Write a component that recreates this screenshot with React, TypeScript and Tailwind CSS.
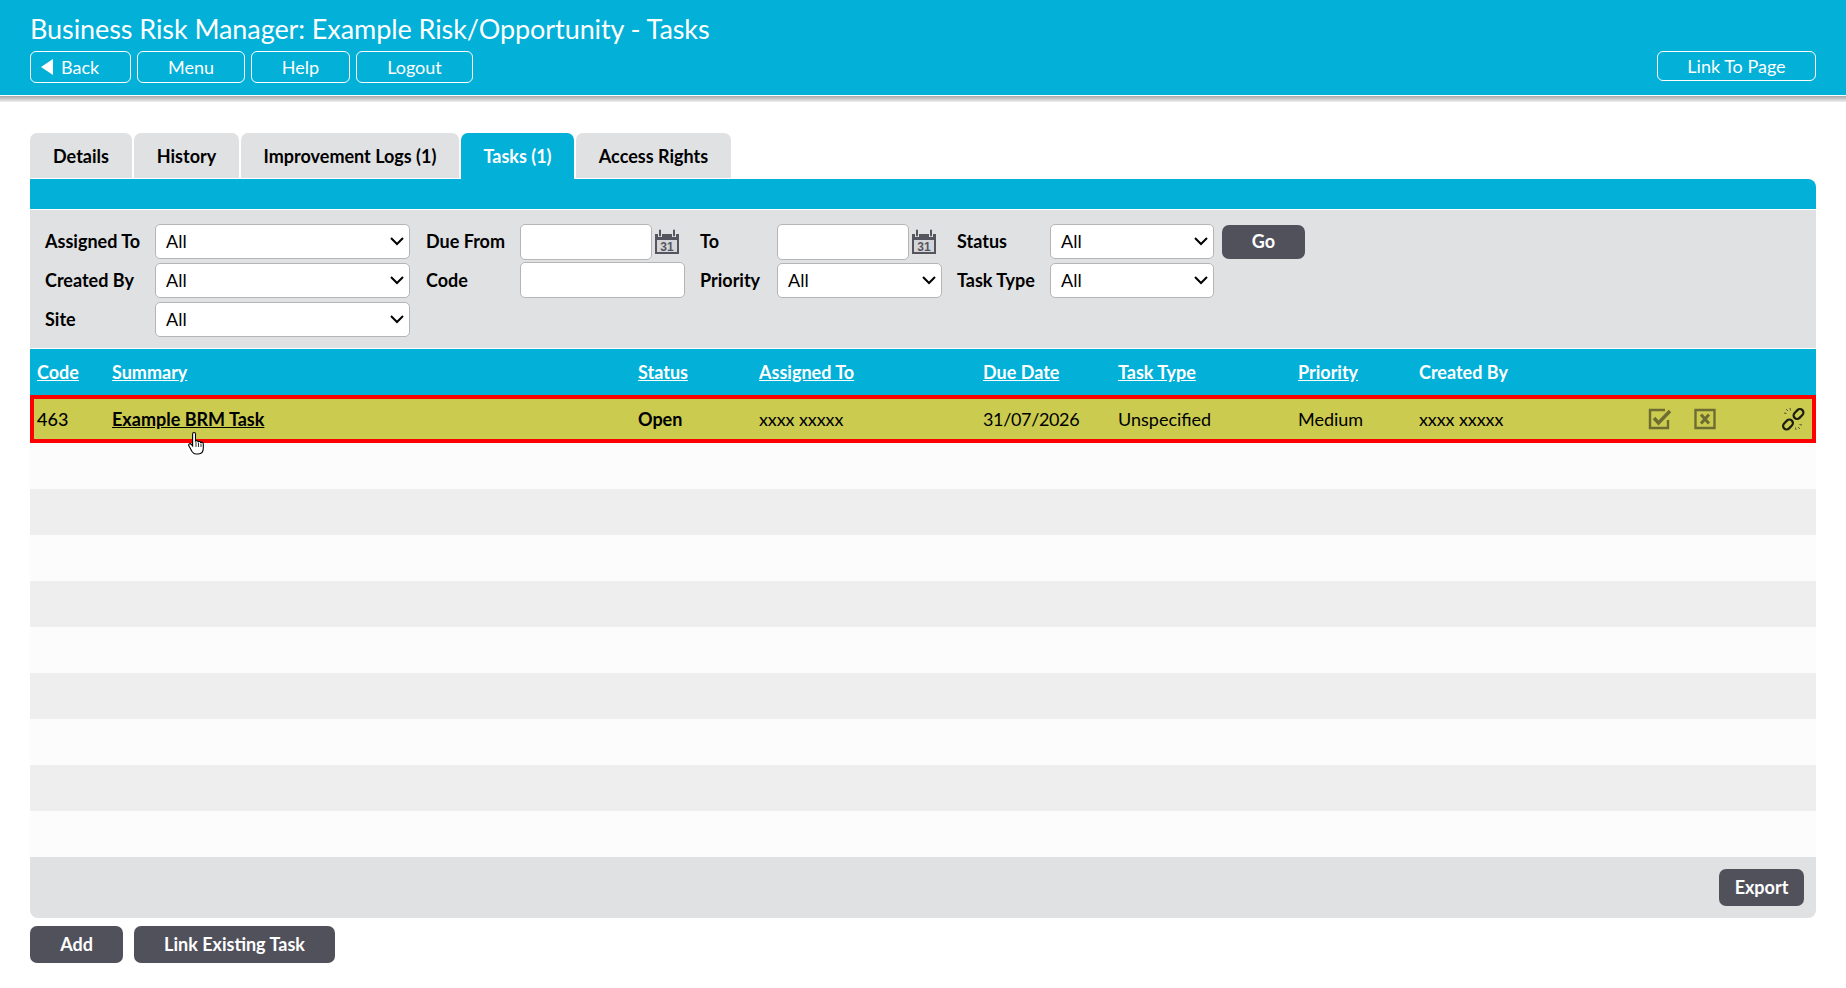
import React from 'react';

const tabs = [
  { label: 'Details', width: 'w-[102px]' },
  { label: 'History', width: 'w-[105px]' },
  { label: 'Improvement Logs (1)', width: 'w-[218px]' },
  { label: 'Tasks (1)', width: 'w-[113px]', active: true },
  { label: 'Access Rights', width: 'w-[155px]' },
];

const columns = ['Code', 'Summary', 'Status', 'Assigned To', 'Due Date', 'Task Type', 'Priority'];

function Calendar() {
  return (
    <svg width="26" height="26" viewBox="0 0 26 26" className="ml-[2px] shrink-0">
      <path d="M1 5h24v20H1z" fill="#55555f" />
      <path d="M3 11h20v12H3z" fill="#d5d6d9" />
      <path d="M6 2v6M20 2v6" stroke="#e0e1e3" strokeWidth="4" />
      <path d="M6 1.500v5M20 1.500v5" stroke="#55555f" strokeWidth="2" strokeLinecap="round" />
      <text x="13" y="21.500" textAnchor="middle" fontSize="12" fontWeight="700" fontFamily="'Liberation Sans', sans-serif" fill="#55555f">31</text>
    </svg>
  );
}

function FilterSelect({ className }: { className: string }) {
  return (
    <div className={`relative ${className}`}>
      <select className="appearance-none w-full h-[35px] bg-white border border-[#b5b5b5] rounded-[5px] pl-[10px] text-[18px] text-black">
        <option>All</option>
      </select>
      <svg width="14" height="9" viewBox="0 0 14 9" className="absolute right-[6px] top-[13px] pointer-events-none">
        <path d="M1 1l6 6 6-6" fill="none" stroke="black" strokeWidth="2" />
      </svg>
    </div>
  );
}

function FilterInput({ className }: { className: string }) {
  return <input className={`h-[36px] bg-white border border-[#b5b5b5] rounded-[5px] ${className}`} />;
}

function Label({ children }: { children: React.ReactNode }) {
  return <label className="text-[18px] font-bold text-black">{children}</label>;
}

function HeaderButton({ children, className }: { children: React.ReactNode; className: string }) {
  return (
    <button className={`h-[32px] border border-white rounded-[6px] text-white text-[18px] flex items-center justify-center ${className}`}>
      {children}
    </button>
  );
}

function DarkButton({ children, className }: { children: React.ReactNode; className: string }) {
  return (
    <button className={`bg-[#51515c] text-white text-[18px] font-bold rounded-[7px] ${className}`}>
      {children}
    </button>
  );
}

export default function App() {
  return (
    <div className="min-h-screen bg-white font-['Lato','Noto_Sans',sans-serif] text-black relative">
      <header className="h-[95px] bg-[#02b0d8] px-[30px] pt-[12px]">
        <h1 className="text-[27px] leading-[34px] text-white tracking-[-0.08px]">
          Business Risk Manager: Example Risk/Opportunity - Tasks
        </h1>
        <div className="flex justify-between mt-[5px]">
          <div className="flex gap-[6px]">
            <HeaderButton className="w-[101px] !justify-start gap-[7px] pl-[9px]">
              <svg width="14" height="18" viewBox="0 0 14 18"><path d="M13 1v16L1 9z" fill="white" /></svg>
              Back
            </HeaderButton>
            <HeaderButton className="w-[108px]">Menu</HeaderButton>
            <HeaderButton className="w-[99px]">Help</HeaderButton>
            <HeaderButton className="w-[117px]">Logout</HeaderButton>
          </div>
          <HeaderButton className="w-[159px] !h-[30px]">Link To Page</HeaderButton>
        </div>
      </header>
      <div className="h-[7px] border-t border-white bg-gradient-to-b from-[#a9a9a9] to-[#efefef]" />

      <main className="px-[30px] pt-[31px]">
        <div className="flex gap-[2px]">
          {tabs.map((tab) => (
            <div
              key={tab.label}
              className={`${tab.width} rounded-t-[7px] flex items-center justify-center pt-[1px] text-[18px] font-bold ${
                tab.active ? 'bg-[#02b0d8] text-white h-[46px]' : 'bg-[#e0e1e3] text-black h-[45px]'
              }`}
            >
              {tab.label}
            </div>
          ))}
        </div>

        <div className="h-[30px] bg-[#02b0d8] rounded-tr-[8px]" />

        {/* Filters */}
        <div className="mt-[1px] h-[138px] bg-[#e0e1e3] pl-[15px] pt-[12px]">
          <div className="grid grid-cols-[110px_271px_94px_180px_77px_180px_93px_172px_auto] grid-rows-[39px_38px_40px] items-center justify-start">
            <Label>Assigned To</Label>
            <FilterSelect className="w-[255px]" />
            <Label>Due From</Label>
            <div className="flex items-center">
              <FilterInput className="w-[132px]" />
              <Calendar />
            </div>
            <Label>To</Label>
            <div className="flex items-center">
              <FilterInput className="w-[132px]" />
              <Calendar />
            </div>
            <Label>Status</Label>
            <FilterSelect className="w-[164px]" />
            <DarkButton className="w-[83px] h-[34px]">Go</DarkButton>

            <Label>Created By</Label>
            <FilterSelect className="w-[255px]" />
            <Label>Code</Label>
            <FilterInput className="w-[165px]" />
            <Label>Priority</Label>
            <FilterSelect className="w-[165px]" />
            <Label>Task Type</Label>
            <FilterSelect className="w-[164px]" />
            <div />

            <Label>Site</Label>
            <FilterSelect className="w-[255px]" />
          </div>
        </div>

        {/* Task list */}
        <div className="mt-[1px] h-[46px] bg-[#02b0d8] grid grid-cols-[75px_526px_121px_224px_135px_180px_121px_1fr] items-center text-[18px] font-bold text-white">
          {columns.map((col) => (
            <a key={col} className="pl-[7px] underline">{col}</a>
          ))}
          <span className="pl-[7px]">Created By</span>
        </div>

        <div className="h-[48px] border-[4px] border-[#ff0000] bg-[#cbcb4f] grid grid-cols-[71px_526px_121px_224px_135px_180px_121px_236px_46px_22px_1fr] items-center text-[18px]">
          <span className="pl-[3px] font-medium">463</span>
          <a className="pl-[7px] font-bold underline">Example BRM Task</a>
          <span className="pl-[7px] font-bold">Open</span>
          <span className="pl-[7px] tracking-[-0.1px]">xxxx xxxxx</span>
          <span className="pl-[7px] tracking-[-0.35px]">31/07/2026</span>
          <span className="pl-[7px]">Unspecified</span>
          <span className="pl-[7px]">Medium</span>
          <span className="pl-[7px] tracking-[-0.1px]">xxxx xxxxx</span>
          <svg width="24" height="22" viewBox="0 0 24 22">
            <path d="M20 12v8H2V2h15" fill="none" stroke="#6d6d33" strokeWidth="2.400" />
            <path d="M6 10l4.500 5L22 3" fill="none" stroke="#6d6d33" strokeWidth="3.400" />
          </svg>
          <svg width="22" height="22" viewBox="0 0 22 22">
            <path d="M1.500 2h19v18h-19z" fill="none" stroke="#6d6d33" strokeWidth="2.400" />
            <path d="M7 6.500l8 9M15 6.500l-8 9" fill="none" stroke="#6d6d33" strokeWidth="3" />
          </svg>
          <svg width="24" height="24" viewBox="0 0 24 24" className="justify-self-end mr-[7px]">
            <rect x="1.500" y="14" width="11" height="7" rx="3.500" transform="rotate(-45 7 17.500)" fill="none" stroke="#1c1c10" strokeWidth="2.200" />
            <rect x="12" y="3.500" width="11" height="7" rx="3.500" transform="rotate(-45 17.500 7)" fill="none" stroke="#1c1c10" strokeWidth="2.200" />
            <path d="M5 2l2 2M3 6l2.500 .5M9 1l.5 2.500M19 22l-2-2M21 18l-2.500-.5M15 23l-.5-2.500" stroke="#55553a" strokeWidth="1" />
          </svg>
        </div>

        {/* empty rows */}
        <div className="h-[46px] bg-[#fcfcfc]" />
        <div className="h-[46px] bg-[#eeeeee]" />
        <div className="h-[46px] bg-[#fcfcfc]" />
        <div className="h-[46px] bg-[#eeeeee]" />
        <div className="h-[46px] bg-[#fcfcfc]" />
        <div className="h-[46px] bg-[#eeeeee]" />
        <div className="h-[46px] bg-[#fcfcfc]" />
        <div className="h-[46px] bg-[#eeeeee]" />
        <div className="h-[46px] bg-[#fcfcfc]" />

        <div className="h-[61px] bg-[#e0e1e3] rounded-b-[8px] flex justify-end items-start pt-[12px] pr-[12px]">
          <DarkButton className="w-[85px] h-[37px]">Export</DarkButton>
        </div>

        <div className="flex gap-[11px] mt-[8px]">
          <DarkButton className="w-[93px] h-[37px]">Add</DarkButton>
          <DarkButton className="w-[201px] h-[37px]">Link Existing Task</DarkButton>
        </div>
      </main>

      {/* mouse pointer over the row */}
      <svg width="18" height="24" viewBox="0 0 18 24" className="absolute left-[188px] top-[431px]">
        <path
          d="M6 1.500c1 0 1.500.7 1.500 1.500v7l1-.5c1 0 1.500.5 1.500 1l1-.3c1 0 1.500.6 1.500 1.100l1-.2c1 0 1.800.8 1.800 2v4c0 3-1.500 5.900-5 5.900H8c-2 0-3-1-4-2.500L1 15c-.6-1-.3-2 .6-2.300.7-.2 1.400.2 2 1l1 1.300V3c0-1 .4-1.500 1.400-1.500z"
          fill="white"
          stroke="black"
          strokeWidth="1.100"
        />
        <path d="M8 11v5M10.500 11.500v4.500M13 12.500v3.500" stroke="black" strokeWidth="0.800" />
      </svg>
    </div>
  );
}
